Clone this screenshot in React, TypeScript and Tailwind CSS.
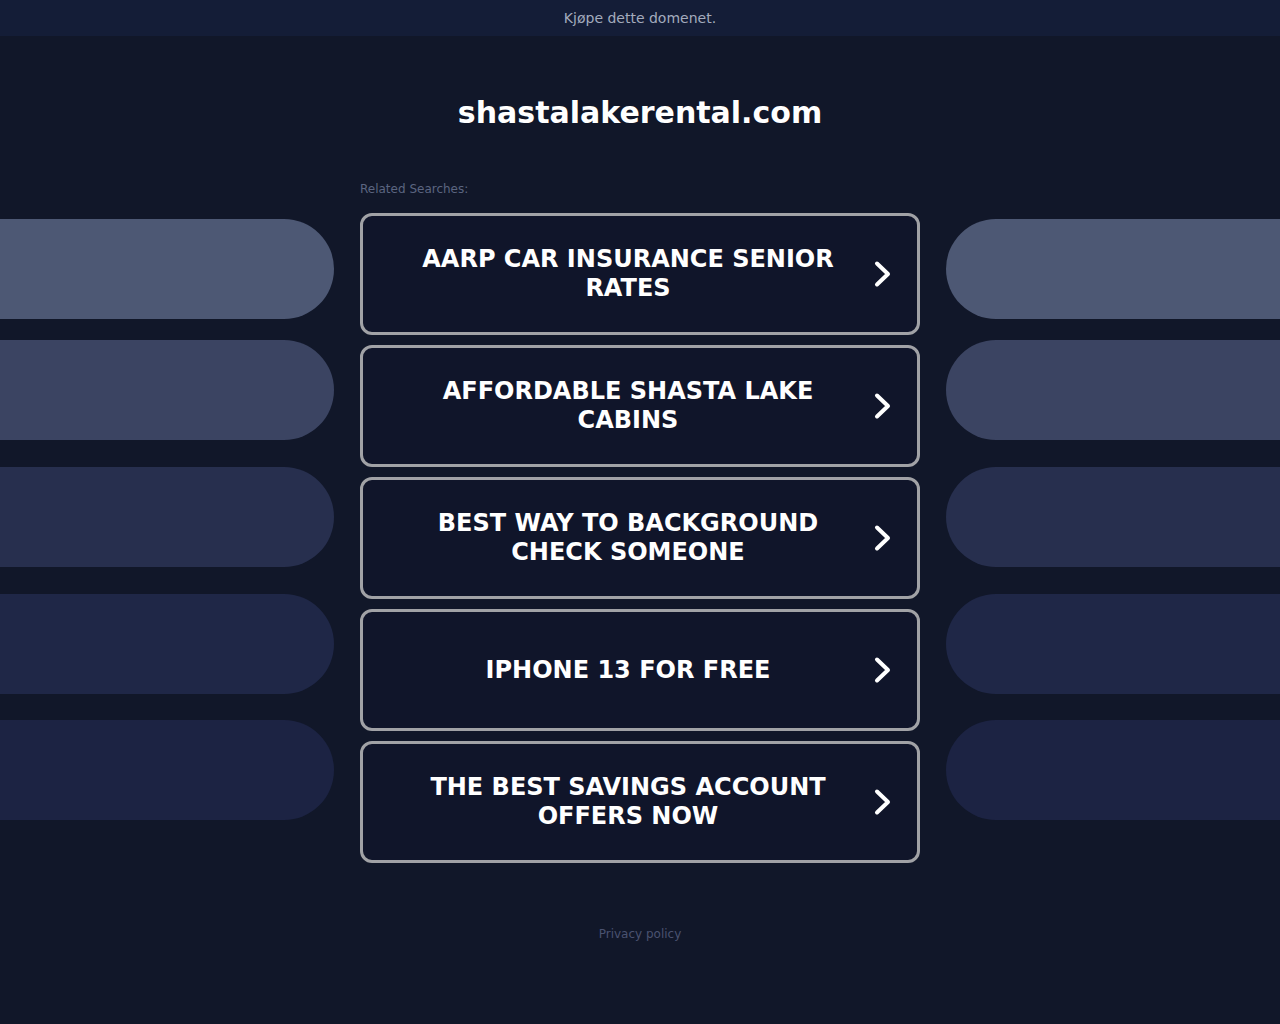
const searches = [
  "AARP CAR INSURANCE SENIOR RATES",
  "AFFORDABLE SHASTA LAKE CABINS",
  "BEST WAY TO BACKGROUND CHECK SOMEONE",
  "IPHONE 13 FOR FREE",
  "THE BEST SAVINGS ACCOUNT OFFERS NOW",
];

// decorative side pills, top to bottom
const pills = [
  { color: "bg-[#4d5874]", gap: "mt-[6px]" },
  { color: "bg-[#3b4462]", gap: "mt-[21px]" },
  { color: "bg-[#272f4e]", gap: "mt-[27px]" },
  { color: "bg-[#1f2747]", gap: "mt-[27px]" },
  { color: "bg-[#1c2343]", gap: "mt-[26px]" },
];

function Chevron() {
  return (
    <svg width="20" height="28" viewBox="0 0 20 28" className="shrink-0">
      <path
        d="M4 3.5 L15 14 L4 24.5"
        fill="none"
        stroke="white"
        strokeWidth="4"
        strokeLinecap="round"
        strokeLinejoin="round"
      />
    </svg>
  );
}

function PillColumn({ side }: { side: "left" | "right" }) {
  return (
    <div className="w-[334px] shrink-0 flex flex-col">
      {pills.map((p, i) => (
        <div
          key={i}
          className={`h-[100px] ${p.gap} ${p.color} ${
            side === "left" ? "rounded-r-[50px]" : "rounded-l-[50px]"
          }`}
        />
      ))}
    </div>
  );
}

export default function App() {
  return (
    <div
      className="min-h-screen bg-[#111729] text-white"
      style={{ fontFamily: '"DejaVu Sans", sans-serif' }}
    >
      <div className="h-9 bg-[#141d37] flex items-center justify-center text-sm text-[#a3abbd]">
        Kjøpe dette domenet.
      </div>

      <h1 className="mt-[59px] text-center text-[30px] leading-[36px] font-bold text-white">
        shastalakerental.com
      </h1>

      <div className="w-[560px] mx-auto mt-[50px] mb-[16px] text-xs text-[#5b6580]">
        Related Searches:
      </div>

      <div className="flex justify-between">
        <PillColumn side="left" />
        <div className="w-[560px] flex flex-col gap-[10px]">
          {searches.map((s) => (
            <a
              key={s}
              href="#"
              className="h-[122px] flex items-center rounded-xl border-[3px] border-[#a1a2a6] bg-[#10152a] pl-5 pr-[24px]"
            >
              <span className="flex-1 text-center text-2xl leading-[29px] font-bold tracking-normal text-white px-4">
                {s}
              </span>
              <Chevron />
            </a>
          ))}
        </div>
        <PillColumn side="right" />
      </div>

      <div className="mt-[63px] pb-20 text-center text-xs text-[#4a5270]">
        Privacy policy
      </div>
    </div>
  );
}
